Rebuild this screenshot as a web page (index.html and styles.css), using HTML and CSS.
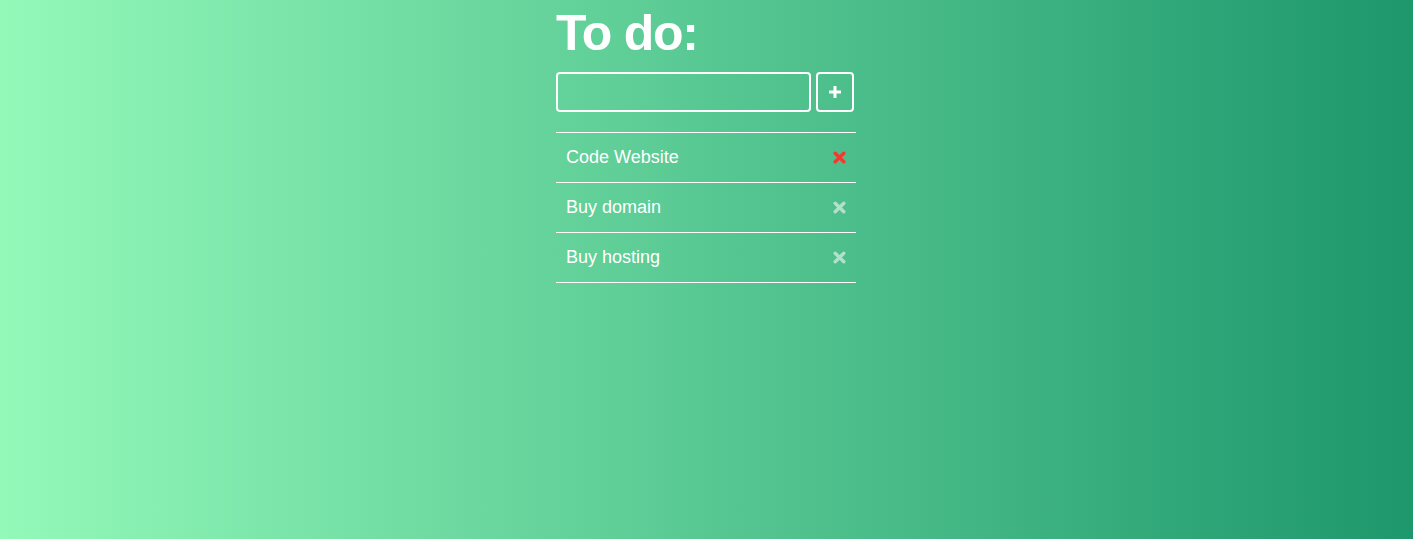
FILE: index.html
```html
<!DOCTYPE html>
<html>
<head>
<meta charset="utf-8">
<link rel="stylesheet" href="styles.css">
</head>
<body>
<div class="app">
  <h1 class="title">To do:</h1>
  <form class="add-form">
    <input class="add-input" type="text">
    <button class="add-btn" type="button">
      <svg width="14" height="14" viewBox="0 0 14 14"><path d="M7 1v12M1 7h12" stroke="#fff" stroke-width="3" fill="none"/></svg>
    </button>
  </form>
  <ul class="list">
    <li class="item"><span>Code Website</span>
      <svg class="x x-red" width="13" height="13" viewBox="0 0 13 13"><path d="M2.2 2.2l8.6 8.6M10.8 2.2l-8.6 8.6" stroke-width="3.4" stroke-linecap="round" fill="none"/></svg></li>
    <li class="item"><span>Buy domain</span>
      <svg class="x" width="13" height="13" viewBox="0 0 13 13"><path d="M2.2 2.2l8.6 8.6M10.8 2.2l-8.6 8.6" stroke-width="3.4" stroke-linecap="round" fill="none"/></svg></li>
    <li class="item"><span>Buy hosting</span>
      <svg class="x" width="13" height="13" viewBox="0 0 13 13"><path d="M2.2 2.2l8.6 8.6M10.8 2.2l-8.6 8.6" stroke-width="3.4" stroke-linecap="round" fill="none"/></svg></li>
  </ul>
</div>
</body>
</html>
```
FILE: styles.css
```css
html, body {
  margin: 0;
  height: 100%;
}
body {
  background: linear-gradient(to right, #93f9b9, #1d976c);
  font-family: "Liberation Sans", Arial, sans-serif;
  color: #fff;
  padding-right: 1px;
  box-sizing: border-box;
}
.app {
  width: 300px;
  margin: 0 auto;
  padding-top: 3px;
}
.title {
  margin: 0 0 9px 0;
  font-size: 50px;
  line-height: 60px;
  font-weight: bold;
  letter-spacing: -1.2px;
}
.add-form {
  display: flex;
  gap: 5px;
  margin: 0;
}
.add-input {
  box-sizing: border-box;
  width: 255px;
  height: 40px;
  background: transparent;
  border: 2px solid #fff;
  border-radius: 4px;
  outline: none;
  color: #fff;
  font-size: 18px;
  padding: 0 8px;
  margin: 0;
}
.add-btn {
  box-sizing: border-box;
  width: 38px;
  height: 40px;
  background: transparent;
  border: 2px solid #fff;
  border-radius: 4px;
  display: flex;
  align-items: center;
  justify-content: center;
  padding: 0;
  margin: 0;
}
.list {
  list-style: none;
  margin: 20px 0 0 0;
  padding: 0;
  border-bottom: 1px solid #fff;
}
.item {
  display: flex;
  align-items: center;
  justify-content: space-between;
  height: 49px;
  border-top: 1px solid #fff;
  padding: 0 10px;
  font-size: 18px;
}
.x {
  stroke: rgba(255, 255, 255, 0.55);
}
.x-red {
  stroke: #ee3b32;
}
```
